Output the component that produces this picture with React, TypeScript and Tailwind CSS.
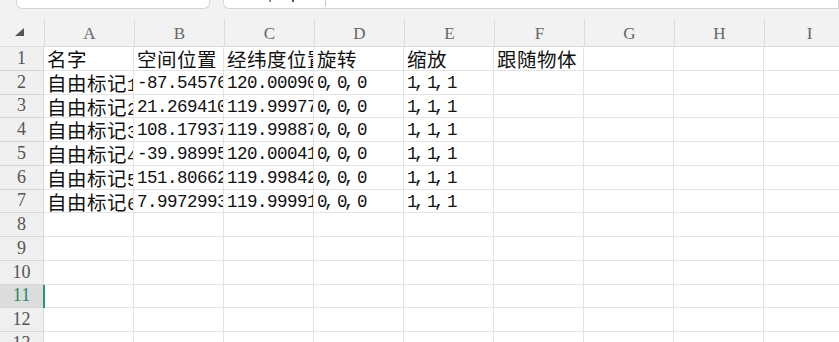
const cols = ['A', 'B', 'C', 'D', 'E', 'F', 'G', 'H', 'I']

const data: string[][] = [
  ['名字', '空间位置', '经纬度位置', '旋转', '缩放', '跟随物体'],
  ['自由标记1', '-87.5457631', '120.0009012', '0,0,0', '1,1,1'],
  ['自由标记2', '21.2694105', '119.9997734', '0,0,0', '1,1,1'],
  ['自由标记3', '108.179372', '119.9988711', '0,0,0', '1,1,1'],
  ['自由标记4', '-39.9899521', '120.0004152', '0,0,0', '1,1,1'],
  ['自由标记5', '151.806624', '119.9984237', '0,0,0', '1,1,1'],
  ['自由标记6', '7.99729935', '119.9999108', '0,0,0', '1,1,1'],
]

const ROWS = 13

// half-width text: commas sit at the left of their cell like in the sheet font
function Latin({ text }: { text: string }) {
  const bits = text.split(/(,)/)
  return (
    <span className="font-['Liberation_Mono',monospace] text-[17.5px] tracking-[-0.5px]">
      {bits.map((b, i) =>
        b === ',' ? (
          <span key={i} className="relative left-[-3px]">
            ,
          </span>
        ) : (
          b
        )
      )}
    </span>
  )
}

function CellText({ text }: { text: string }) {
  const parts = text.match(/[\u4e00-\u9fff]+|[^\u4e00-\u9fff]+/g) ?? []
  return (
    <>
      {parts.map((p, i) =>
        /[\u4e00-\u9fff]/.test(p) ? (
          <span key={i} className="font-['Noto_Sans_CJK_SC',sans-serif] text-[19.5px] tracking-[0.5px]">
            {p}
          </span>
        ) : (
          <Latin key={i} text={p} />
        )
      )}
    </>
  )
}

export default function App() {
  return (
    <div className="w-[839px] h-[342px] overflow-hidden bg-[#f2f2f2]">
      {/* formula bar remnants */}
      <div className="flex h-[9px]">
        <div className="ml-[16px] w-[201px] h-[9px] bg-white border border-t-0 border-[#d4d4d4] rounded-b-[6px]" />
        <div className="ml-[13px] w-[640px] h-[9px] bg-white border border-t-0 border-[#d4d4d4] rounded-bl-[6px] relative">
          <div className="absolute left-[101px] top-0 w-px h-[7px] bg-[#c8c8c8]" />
          <div className="absolute left-[45px] top-0 w-[2px] h-[2px] bg-[#888]" />
          <div className="absolute left-[68px] top-0 w-[2px] h-[2px] bg-[#555]" />
        </div>
      </div>

      {/* column headers */}
      <div className="flex h-[38px] border-b border-[#dcdcdc]">
        <div className="w-[44px] shrink-0 flex items-end justify-center pb-[10px] pr-[6px]">
          <svg width="9" height="8" viewBox="0 0 9 8">
            <polygon points="9,0 9,8 0,8" fill="#555" />
          </svg>
        </div>
        {cols.map((c) => (
          <div key={c} className="w-[90px] shrink-0 pt-[10px]">
            <div className="h-full border-l border-[#dcdcdc] flex items-center justify-center pt-[2px] font-['Liberation_Serif',serif] text-[17px] text-[#666]">
              {c}
            </div>
          </div>
        ))}
      </div>

      {/* rows */}
      {Array.from({ length: ROWS }).map((_, r) => {
        const selected = r === 10
        const row = data[r] ?? []
        return (
          <div key={r} className="flex h-[23.75px] relative">
            <div
              className={`w-[44px] shrink-0 border-r border-b border-[#d6d6d6] flex items-center justify-center font-['Liberation_Serif',serif] text-[18px] ${
                selected ? 'bg-[#dcdcdc] text-[#1f8a5b]' : 'bg-[#f0f0f0] text-[#555]'
              }`}
            >
              {r + 1}
            </div>
            {cols.map((c, ci) => (
              <div
                key={c}
                className="w-[90px] shrink-0 bg-white border-r border-b border-[#e3e3e3] overflow-hidden whitespace-nowrap pl-[3px] leading-[23px] text-[#111]"
              >
                {row[ci] && <CellText text={row[ci]} />}
              </div>
            ))}
            {selected && <div className="absolute left-[43px] top-0 w-[2px] h-full bg-[#1f9d68]" />}
          </div>
        )
      })}
    </div>
  )
}
